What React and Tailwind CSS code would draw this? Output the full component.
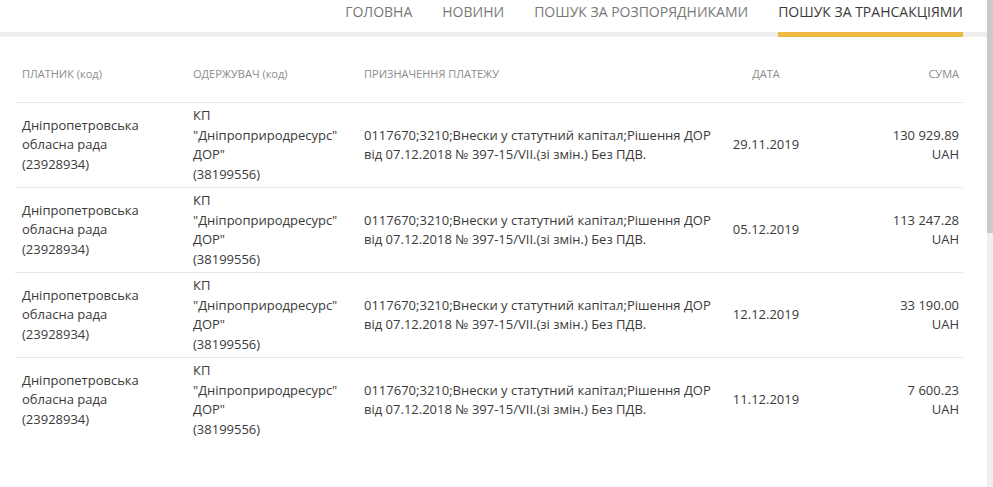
const rows = [
  { date: '29.11.2019', sum: '130 929.89' },
  { date: '05.12.2019', sum: '113 247.28' },
  { date: '12.12.2019', sum: '33 190.00' },
  { date: '11.12.2019', sum: '7 600.23' },
];

const navItems = ['Головна', 'Новини', 'Пошук за розпорядниками', 'Пошук за трансакціями'];

const cols = 'grid grid-cols-[171px_171px_365px_88px_153px]';

export default function App() {
  return (
    <div className="flex h-[487px] w-[993px] overflow-hidden bg-white text-[#3a3a3a]"
      style={{ fontFamily: '"Open Sans", "Noto Sans", sans-serif' }}>
      <div className="min-w-0 flex-1">
        <nav className="flex justify-end gap-[30px] pr-[24px] border-b-[5px] border-[#eeeeee]">
          {navItems.map((item, i) => {
            const active = i === navItems.length - 1;
            return (
              <a key={item}
                className={
                  'pt-[2px] pb-[10px] -mb-[5px] text-[14px] leading-[20px] uppercase whitespace-nowrap border-b-[5px] ' +
                  (active ? 'border-[#f0b944] text-[#3a3a3a]' : 'border-transparent text-[#777]')
                }>
                {item}
              </a>
            );
          })}
        </nav>

        <div className="ml-[15px] w-[948px]">
          <div className={cols + ' pt-[29px] pb-[20px] border-b border-[#e6e6e6] text-[11px] leading-[16px] uppercase text-[#8c8c8c]'}>
            <div className="pl-[7px]">Платник <span className="normal-case">(код)</span></div>
            <div className="pl-[7px]">Одержувач <span className="normal-case">(код)</span></div>
            <div className="pl-[7px]">Призначення платежу</div>
            <div className="text-center">Дата</div>
            <div className="text-right pr-[4px]">Сума</div>
          </div>

          {rows.map((r, i) => (
            <div key={i}
              className={cols + ' py-[3px] text-[13px] leading-[19.5px] items-center ' +
                (i < rows.length - 1 ? 'border-b border-[#e6e6e6]' : '')}>
              <div className="pl-[7px]">Дніпропетровська<br />обласна рада<br />(23928934)</div>
              <div className="pl-[7px]">КП<br />"Дніпроприродресурс"<br />ДОР"<br />(38199556)</div>
              <div className="pl-[7px] whitespace-nowrap">
                0117670;3210;Внески у статутний капітал;Рішення ДОР<br />
                від 07.12.2018 № 397-15/VII.(зі змін.) Без ПДВ.
              </div>
              <div className="text-center">{r.date}</div>
              <div className="text-right pr-[4px]">{r.sum}<br />UAH</div>
            </div>
          ))}
        </div>
      </div>

      <div className="flex w-[6px] shrink-0 flex-col">
        <div className="h-[233px] bg-[#c9c9c9]" />
        <div className="flex-1 bg-[#f0f0f0]" />
      </div>
    </div>
  );
}
